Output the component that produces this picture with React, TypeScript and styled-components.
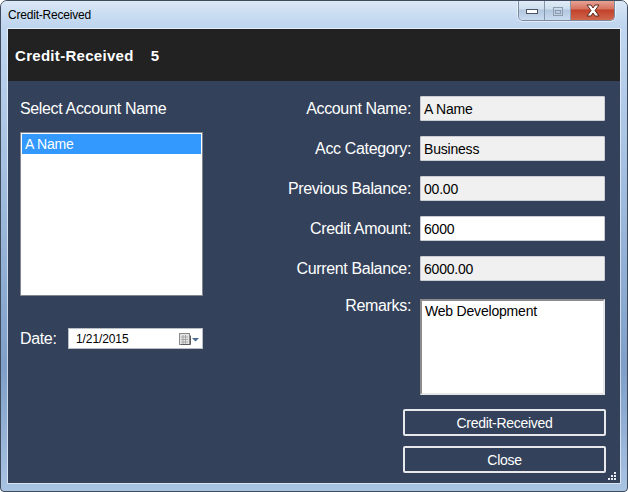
import { createGlobalStyle } from "styled-components";
import styled from "styled-components";

const GlobalStyle = createGlobalStyle`
  html, body {
    margin: 0;
    padding: 0;
    background: #ffffff;
  }
  * {
    box-sizing: border-box;
  }
`;

const fields = [
  { label: "Account Name:", value: "A Name", readOnly: true },
  { label: "Acc Category:", value: "Business", readOnly: true },
  { label: "Previous Balance:", value: "00.00", readOnly: true },
  { label: "Credit Amount:", value: "6000", readOnly: false },
  { label: "Current Balance:", value: "6000.00", readOnly: true },
];

const App = () => {
  return (
    <>
      <GlobalStyle />
      <Window>
        <TitleBar>
          <TitleText>Credit-Received</TitleText>
          <CaptionGroup>
            <CaptionButton>
              <svg width="14" height="8" viewBox="0 0 14 8">
                <rect x="1.5" y="2.5" width="11" height="4" fill="#fff" stroke="#4a5566" />
              </svg>
            </CaptionButton>
            <CaptionButton>
              <svg width="12" height="11" viewBox="0 0 12 11">
                <rect x="1.5" y="1.5" width="9" height="8" fill="none" stroke="#8f9cad" />
                <rect x="3.5" y="4.5" width="5" height="3" fill="none" stroke="#8f9cad" />
              </svg>
            </CaptionButton>
            <CloseButton>
              <svg width="16" height="13" viewBox="0 0 16 13">
                <path
                  d="M2 1 L6 1 L8 4 L10 1 L14 1 L10 6.5 L14 12 L10 12 L8 9 L6 12 L2 12 L6 6.5 Z"
                  fill="#fff"
                  stroke="#5a2a22"
                  strokeWidth="1"
                  strokeLinejoin="round"
                />
              </svg>
            </CloseButton>
          </CaptionGroup>
        </TitleBar>

        <Client>
          <Header>
            <HeaderTitle>Credit-Received</HeaderTitle>
            <HeaderCount>5</HeaderCount>
          </Header>

          <Body>
            <LeftColumn>
              <BigLabel>Select Account Name</BigLabel>
              <ListBox>
                <ListItem $selected>A Name</ListItem>
              </ListBox>
              <DateRow>
                <BigLabel>Date:</BigLabel>
                <DatePicker>
                  <span>1/21/2015</span>
                  <PickerIcon>
                    <svg width="22" height="14" viewBox="0 0 22 14">
                      <rect x="1.5" y="1.5" width="10" height="11" fill="#e4e4e4" stroke="#8a8a8a" />
                      <path d="M3 5h7M3 7.5h7M3 10h7M5 3v9M7.5 3v9" stroke="#a8a8a8" strokeWidth="1" />
                      <path d="M3 12.5h9.5v-9" stroke="#5c5c5c" fill="none" />
                      <path d="M14 6 L21 6 L17.5 9.5 Z" fill="#4d6a92" />
                    </svg>
                  </PickerIcon>
                </DatePicker>
              </DateRow>
            </LeftColumn>

            <RightPanel>
              <FieldGrid>
                {fields.map((f) => (
                  <FieldRow key={f.label}>
                    <FieldLabel>{f.label}</FieldLabel>
                    <TextBox $readOnly={f.readOnly}>{f.value}</TextBox>
                  </FieldRow>
                ))}
                <FieldRow $top>
                  <FieldLabel $top>Remarks:</FieldLabel>
                  <TextArea>Web Development</TextArea>
                </FieldRow>
              </FieldGrid>
              <ButtonStack>
                <FlatButton>Credit-Received</FlatButton>
                <FlatButton>Close</FlatButton>
              </ButtonStack>
            </RightPanel>
          </Body>

          <SizeGrip>
            <svg width="10" height="10" viewBox="0 0 10 10">
              {[
                [7, 1],
                [4, 4],
                [7, 4],
                [1, 7],
                [4, 7],
                [7, 7],
              ].map(([x, y]) => (
                <rect key={`${x}-${y}`} x={x} y={y} width="2" height="2" fill="#e8edf4" />
              ))}
            </svg>
          </SizeGrip>
        </Client>
      </Window>
    </>
  );
};

const Window = styled.div`
  width: 628px;
  height: 492px;
  display: flex;
  flex-direction: column;
  border: 1px solid #3e4c5e;
  border-radius: 7px 7px 4px 4px;
  background: linear-gradient(180deg, #c7dcf3 0%, #bcd3ee 10%, #9fbbdd 40%, #7f9fc8 75%, #a9c3e2 100%);
  overflow: hidden;
`;

const TitleBar = styled.div`
  height: 28px;
  display: flex;
  align-items: flex-start;
  background: linear-gradient(180deg, #dbe8f7 0%, #c6daf1 60%, #bed4ee 100%);
`;

const TitleText = styled.div`
  padding: 7px 0 0 7px;
  font-family: "Liberation Sans", Arial, sans-serif;
  font-size: 12px;
  color: #000;
  letter-spacing: -0.2px;
`;

const CaptionGroup = styled.div`
  display: flex;
  margin-left: auto;
  margin-right: 12px;
  margin-top: -1px;
  border: 1px solid #7b8a9e;
  border-top: none;
  border-radius: 0 0 5px 5px;
  overflow: hidden;
  box-shadow: 0 0 0 1px rgba(255, 255, 255, 0.5);
`;

const CaptionButton = styled.div`
  width: 26px;
  height: 20px;
  display: flex;
  align-items: center;
  justify-content: center;
  padding-top: 2px;
  background: linear-gradient(180deg, #e3edf8 0%, #cedeef 45%, #b2c6de 50%, #c9dbee 100%);
  border-right: 1px solid #8696ab;
`;

const CloseButton = styled.div`
  width: 43px;
  height: 20px;
  display: flex;
  align-items: center;
  justify-content: center;
  padding-top: 1px;
  background: linear-gradient(180deg, #e9a99b 0%, #d7725f 45%, #c2412a 50%, #d0674c 100%);
`;

const Client = styled.div`
  position: relative;
  flex: 1;
  display: flex;
  flex-direction: column;
  margin: 0 7px 8px 7px;
  box-shadow: 0 0 0 1px rgba(255, 255, 255, 0.55);
  background: #33415a;
`;

const Header = styled.div`
  height: 52px;
  display: flex;
  align-items: center;
  padding-left: 7px;
  background: #222222;
  color: #ffffff;
  font-family: "Comic Sans MS", "Liberation Sans", Arial, sans-serif;
  font-weight: bold;
  font-size: 15px;
`;

const HeaderTitle = styled.span`
  letter-spacing: 0.3px;
`;

const HeaderCount = styled.span`
  margin-left: 17px;
`;

const Body = styled.div`
  flex: 1;
  display: flex;
  padding: 15px 15px 0 12px;
  font-family: "Liberation Sans", Arial, sans-serif;
`;

const LeftColumn = styled.div`
  width: 183px;
  display: flex;
  flex-direction: column;
`;

const BigLabel = styled.div`
  color: #ffffff;
  font-size: 16px;
  line-height: 20px;
  letter-spacing: -0.35px;
  margin-top: 3px;
  white-space: nowrap;
`;

const ListBox = styled.div`
  margin-top: 13px;
  height: 164px;
  background: #ffffff;
  border: 1px solid #82878f;
  padding: 1px;
`;

const ListItem = styled.div<{ $selected?: boolean }>`
  height: 20px;
  line-height: 20px;
  padding-left: 3px;
  font-size: 14px;
  letter-spacing: -0.2px;
  color: ${(p) => (p.$selected ? "#ffffff" : "#000000")};
  background: ${(p) => (p.$selected ? "#3399ff" : "transparent")};
`;

const DateRow = styled.div`
  margin-top: 32px;
  display: flex;
  align-items: center;
  justify-content: space-between;

  ${BigLabel} {
    margin-top: 0;
  }
`;

const DatePicker = styled.div`
  width: 135px;
  height: 21px;
  display: flex;
  align-items: center;
  padding-left: 7px;
  background: #ffffff;
  border: 1px solid #b8bec6;
  font-size: 12px;
  color: #000;
  letter-spacing: -0.1px;
`;

const PickerIcon = styled.div`
  margin-left: auto;
  margin-right: 2px;
  display: flex;
  align-items: center;
`;

const RightPanel = styled.div`
  margin-left: auto;
  display: flex;
  flex-direction: column;
  align-items: flex-end;
`;

const FieldGrid = styled.div`
  display: flex;
  flex-direction: column;
  gap: 15px;
`;

const FieldRow = styled.div<{ $top?: boolean }>`
  display: flex;
  justify-content: flex-end;
  align-items: ${(p) => (p.$top ? "flex-start" : "center")};
  gap: 9px;
  margin-top: ${(p) => (p.$top ? "3px" : "0")};
`;

const FieldLabel = styled.div<{ $top?: boolean }>`
  color: #ffffff;
  font-size: 16px;
  line-height: 20px;
  letter-spacing: -0.35px;
  white-space: nowrap;
  margin-top: ${(p) => (p.$top ? "-3px" : "0")};
`;

const TextBox = styled.div<{ $readOnly?: boolean }>`
  width: 185px;
  height: 25px;
  display: flex;
  align-items: center;
  padding-left: 3px;
  font-size: 14px;
  letter-spacing: -0.2px;
  color: #000;
  background: ${(p) => (p.$readOnly ? "#f0f0f0" : "#ffffff")};
  border: 1px solid #c9ccd2;
  border-radius: 1px;
`;

const TextArea = styled.div`
  width: 185px;
  height: 96px;
  padding: 2px 3px;
  font-size: 14px;
  letter-spacing: -0.2px;
  color: #000;
  background: #ffffff;
  border: 2px solid;
  border-color: #8c8c8c #e6e6e6 #e6e6e6 #8c8c8c;
`;

const ButtonStack = styled.div`
  margin-top: 14px;
  margin-right: -1px;
  display: flex;
  flex-direction: column;
  gap: 10px;
`;

const FlatButton = styled.div`
  width: 203px;
  height: 27px;
  display: flex;
  align-items: center;
  justify-content: center;
  background: #33415a;
  border: 2px solid #e6e8ec;
  border-radius: 2px;
  color: #ffffff;
  font-size: 14px;
  letter-spacing: -0.3px;
`;

const SizeGrip = styled.div`
  position: absolute;
  right: 3px;
  bottom: 2px;
  display: flex;
`;

export default App;
